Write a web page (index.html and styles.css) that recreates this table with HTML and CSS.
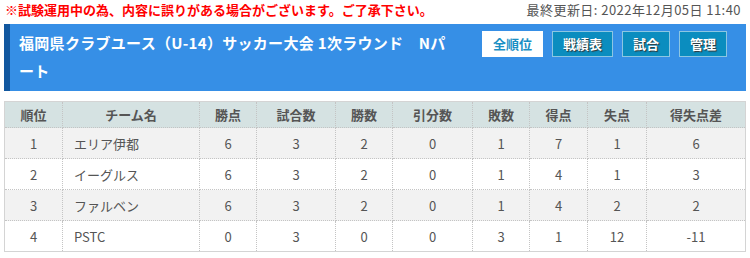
FILE: index.html
```html
<!DOCTYPE html>
<html lang="ja">
<head>
<meta charset="utf-8">
<link rel="stylesheet" href="styles.css">
</head>
<body>
<div class="page">
  <div class="topbar">
    <span class="notice">※試験運用中の為、内容に誤りがある場合がございます。ご了承下さい。</span>
    <span class="updated">最終更新日: 2022年12月05日 11:40</span>
  </div>
  <div class="header">
    <h1 class="title">福岡県クラブユース（U-14）サッカー大会 1次ラウンド　Nパート</h1>
    <div class="buttons">
      <a class="btn btn-active">全順位</a>
      <a class="btn">戦績表</a>
      <a class="btn">試合</a>
      <a class="btn">管理</a>
    </div>
  </div>
  <table class="standings">
    <colgroup>
      <col style="width:58px"><col style="width:137px"><col style="width:57px"><col style="width:79px"><col style="width:57px"><col style="width:80px"><col style="width:57px"><col style="width:58px"><col style="width:59px"><col>
    </colgroup>
    <thead>
      <tr><th>順位</th><th>チーム名</th><th>勝点</th><th>試合数</th><th>勝数</th><th>引分数</th><th>敗数</th><th>得点</th><th>失点</th><th>得失点差</th></tr>
    </thead>
    <tbody>
      <tr><td>1</td><td class="team">エリア伊都</td><td>6</td><td>3</td><td>2</td><td>0</td><td>1</td><td>7</td><td>1</td><td>6</td></tr>
      <tr><td>2</td><td class="team">イーグルス</td><td>6</td><td>3</td><td>2</td><td>0</td><td>1</td><td>4</td><td>1</td><td>3</td></tr>
      <tr><td>3</td><td class="team">ファルベン</td><td>6</td><td>3</td><td>2</td><td>0</td><td>1</td><td>4</td><td>2</td><td>2</td></tr>
      <tr><td>4</td><td class="team">PSTC</td><td>0</td><td>3</td><td>0</td><td>0</td><td>3</td><td>1</td><td>12</td><td>-11</td></tr>
    </tbody>
  </table>
</div>
</body>
</html>
```
FILE: styles.css
```css
html, body {
  margin: 0;
  padding: 0;
  background: #ffffff;
}
body {
  font-family: "Noto Sans CJK JP", "Noto Sans", sans-serif;
  color: #555555;
}
.page {
  padding: 0 4px;
}
.topbar {
  display: flex;
  justify-content: space-between;
  align-items: center;
  height: 20px;
  margin-bottom: 4px;
  font-size: 13px;
  line-height: 20px;
}
.notice {
  color: #ff0000;
  font-weight: bold;
  padding-left: 1px;
}
.updated {
  color: #555555;
  padding-right: 5px;
  letter-spacing: 0.45px;
}
.header {
  display: flex;
  align-items: flex-start;
  background: #368fe6;
  border-left: 6px solid #11579f;
  padding: 5px 19px 6px 9px;
  margin-bottom: 10px;
}
.title {
  flex: 1;
  margin: 0;
  font-size: 15px;
  line-height: 28px;
  font-weight: bold;
  letter-spacing: 0.3px;
  color: #ffffff;
}
.buttons {
  display: flex;
  gap: 9px;
  margin-top: 2px;
  margin-left: 28px;
}
.btn {
  display: block;
  height: 24px;
  line-height: 24px;
  padding: 0 10px;
  font-size: 13px;
  font-weight: bold;
  color: #ffffff;
  background: #0b8dbf;
  border: 1px solid #8cc6e2;
  text-shadow: 1px 1px 1px #333333;
  white-space: nowrap;
}
.btn-active {
  background: #ffffff;
  color: #1a8fc4;
  border-color: #ffffff;
  text-shadow: none;
}
.standings {
  width: 742px;
  border-collapse: collapse;
  table-layout: fixed;
  font-size: 13px;
  color: #555555;
  border: 1px solid #d4d4d4;
}
.standings th {
  height: 25px;
  background: #d5e2e2;
  font-weight: bold;
  text-align: center;
  border: 1px dotted #c4c4c4;
  padding: 0;
}
.standings td {
  height: 30px;
  text-align: center;
  border: 1px dotted #c4c4c4;
  padding: 0;
}
.standings tbody tr:nth-child(odd) td {
  background: #f2f2f2;
}
.standings td.team {
  text-align: left;
  padding-left: 11px;
}
```
